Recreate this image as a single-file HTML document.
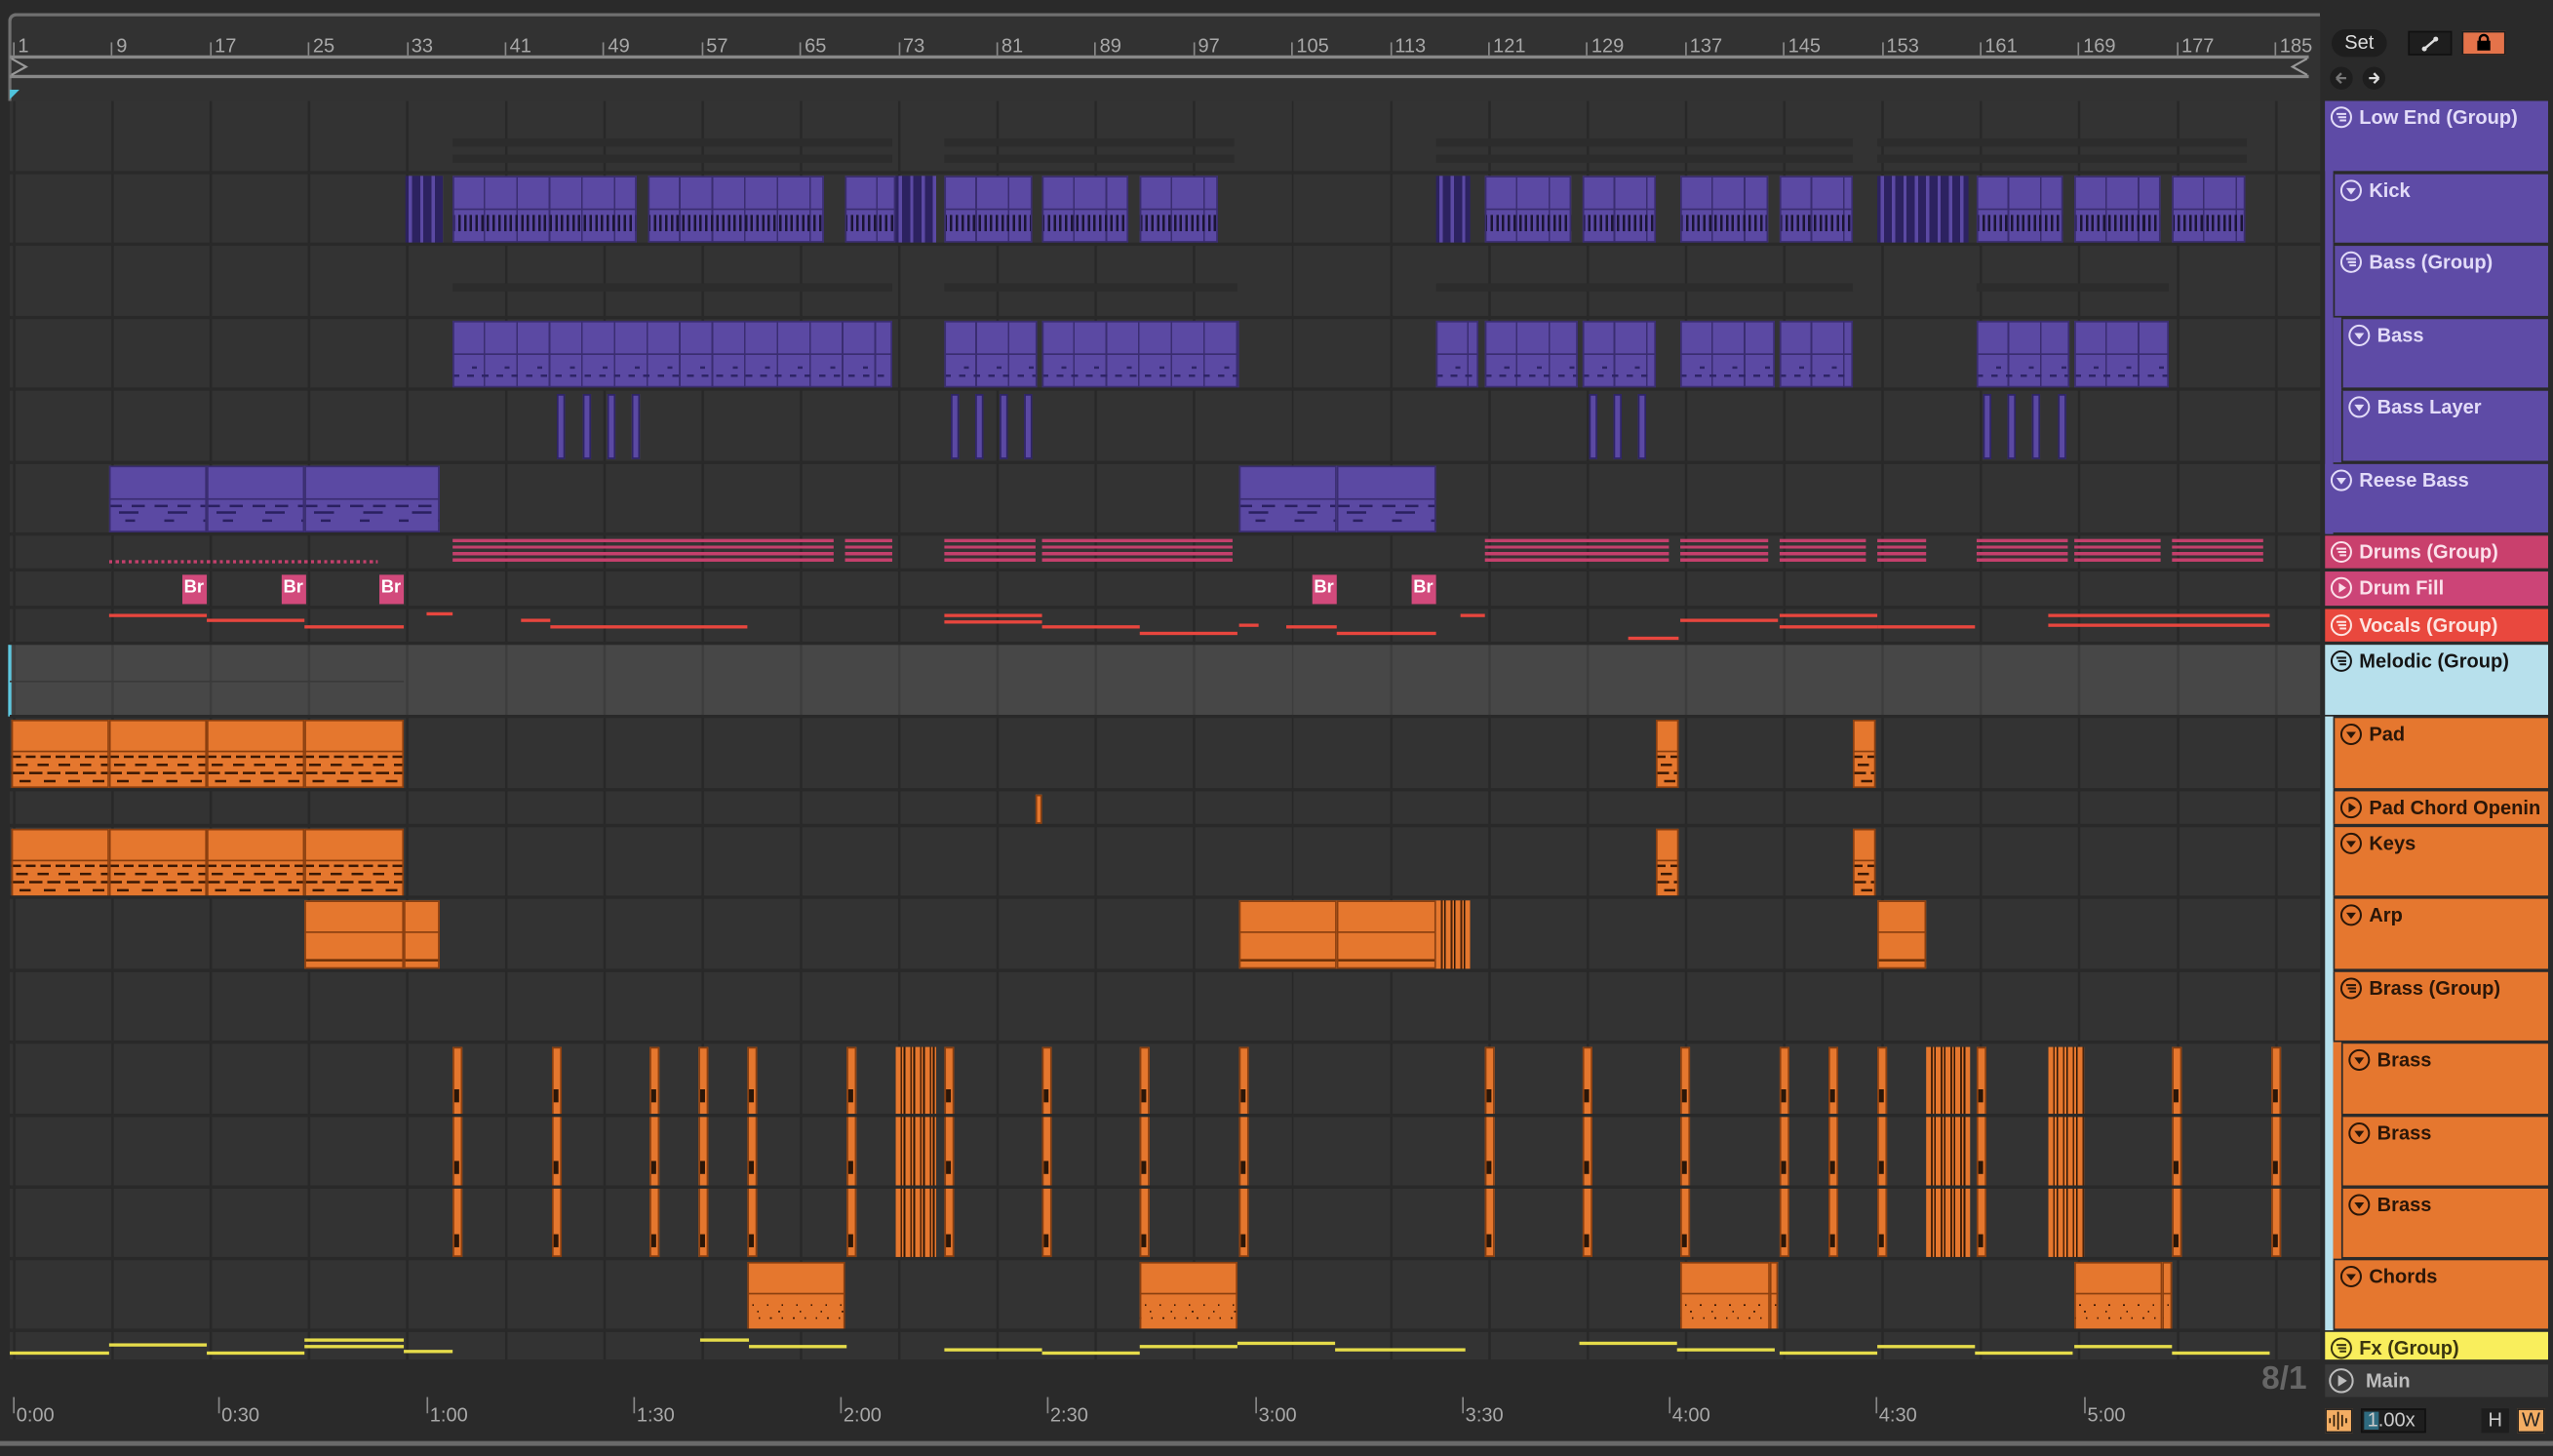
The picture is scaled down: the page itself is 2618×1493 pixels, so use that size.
<!DOCTYPE html>
<html><head><meta charset="utf-8"><style>
html,body{margin:0;padding:0;background:#2a2a2a;overflow:hidden;width:2618px;height:1492px}
#s{position:absolute;left:0;top:0;width:1568px;height:894px;transform:scale(1.66964);transform-origin:0 0;font-family:"Liberation Sans",sans-serif;background:#2a2a2a}
#s div,#s i,#s span{position:absolute;box-sizing:border-box;display:block;font-style:normal}
.lane{left:6px;top:62px;width:1419px;height:773px;background-color:#333;background-image:repeating-linear-gradient(90deg,#282828 0 1.5px,transparent 1.5px 60.4px);background-position:2px 0}
.h{left:6px;width:1419px;height:2px;background:#292929}
.rn{top:21px;font-size:12px;color:#a8a8a8}
.rt{top:26px;width:1px;height:8px;background:#888}
.p{background:#5b49a3;box-shadow:inset 0 0 0 1px #3a2d70}
.k{top:108px;height:41px;background:repeating-linear-gradient(90deg,#1b1535 0 1.5px,transparent 1.5px 3.5px) 0 24px/100% 10px no-repeat,linear-gradient(#3a2d70,#3a2d70) 0 20px/100% 1px no-repeat,repeating-linear-gradient(90deg,transparent 0 19px,#3a2d70 19px 20px),#5b49a3;box-shadow:inset 0 0 0 1px #3a2d70}
.ks{top:108px;height:41px;background:repeating-linear-gradient(90deg,#2c2260 0 2px,#5b49a3 2px 4px,#2c2260 4px 7px)}
.bs{top:197px;height:41px;background:repeating-linear-gradient(90deg,#2e2466 0 4px,transparent 4px 9px) 0 33px/100% 1.5px no-repeat,repeating-linear-gradient(90deg,transparent 0 12px,#2e2466 12px 15px,transparent 15px 20px) 0 28px/100% 1.5px no-repeat,linear-gradient(#3a2d70,#3a2d70) 0 20px/100% 1px no-repeat,repeating-linear-gradient(90deg,transparent 0 19px,#3a2d70 19px 20px),#5b49a3;box-shadow:inset 0 0 0 1px #3a2d70}
.bl{top:242px;height:40px;width:5px;background:#5b49a3;box-shadow:inset 0 0 0 1px #2e2466}
.re{top:286px;height:41px;background:repeating-linear-gradient(90deg,#2a2060 0 8px,transparent 8px 14px) 0 24px/100% 1.5px no-repeat,repeating-linear-gradient(90deg,transparent 0 6px,#2a2060 6px 18px,transparent 18px 30px) 0 28px/100% 1.5px no-repeat,repeating-linear-gradient(90deg,transparent 0 10px,#2a2060 10px 16px,transparent 16px 24px) 0 33px/100% 1.5px no-repeat,linear-gradient(#3a2d70,#3a2d70) 0 20px/100% 1px no-repeat,#5b49a3;box-shadow:inset 0 0 0 1px #3a2d70}
.gh{height:5px;background:#2c2c2c}
.dr{top:331px;height:15px;background:repeating-linear-gradient(180deg,#c4406c 0 2px,transparent 2px 4px)}
.df{top:353px;height:18px;width:15px;background:#d24a7c;color:#fff;font-size:11px;font-weight:bold;padding:2px 0 0 1px;overflow:hidden}
.v{height:2px;background:#e8463e}
.y{height:1.5px;background:#e6dc4a}
.o{background:#e5772e;box-shadow:inset 0 0 0 1px #8a3f10}
.pd{height:42px;background:repeating-linear-gradient(90deg,#3a1804 0 6px,transparent 6px 9px) 0 22px/100% 1.5px no-repeat,repeating-linear-gradient(90deg,transparent 0 3px,#3a1804 3px 10px,transparent 10px 13px) 0 27px/100% 1.5px no-repeat,repeating-linear-gradient(90deg,#3a1804 0 8px,transparent 8px 11px) 0 32px/100% 1.5px no-repeat,repeating-linear-gradient(90deg,transparent 0 5px,#3a1804 5px 12px,transparent 12px 15px) 0 37px/100% 1.5px no-repeat,linear-gradient(#8a3f10,#8a3f10) 0 19px/100% 1px no-repeat,#e5772e;box-shadow:inset 0 0 0 1px #8a3f10}
.ar{top:553px;height:42px;background:linear-gradient(#8a3f10,#8a3f10) 0 19px/100% 1px no-repeat,linear-gradient(#6b3008,#6b3008) 0 36px/100% 1.5px no-repeat,#e5772e;box-shadow:inset 0 0 0 1px #8a3f10}
.br{top:643px;height:129px;width:6px;background:linear-gradient(#2a1608,#2a1608) 1px 26px/3px 8px no-repeat,linear-gradient(#2a1608,#2a1608) 1px 70px/3px 8px no-repeat,linear-gradient(#2a1608,#2a1608) 1px 115px/3px 8px no-repeat,#e5772e;box-shadow:inset 0 0 0 1px #8a3f10}
.bw{top:643px;height:129px;background:repeating-linear-gradient(90deg,#e5772e 0 3px,#4a2208 3px 4px,#e5772e 4px 5px,#2a1608 5px 6px)}
.ch{top:775px;height:42px;background:repeating-linear-gradient(90deg,transparent 0 3px,#3a1804 3px 4px,transparent 4px 9px) 0 26px/100% 1px no-repeat,repeating-linear-gradient(90deg,transparent 0 6px,#3a1804 6px 7px,transparent 7px 13px) 0 30px/100% 1px no-repeat,repeating-linear-gradient(90deg,#3a1804 0 1px,transparent 1px 7px) 0 34px/100% 1px no-repeat,linear-gradient(#8a3f10,#8a3f10) 0 19px/100% 1px no-repeat,#e5772e;box-shadow:inset 0 0 0 1px #8a3f10}
.hd{font-size:12px;font-weight:bold;padding:3px 0 0 21px;white-space:nowrap;overflow:hidden}
.hd svg{position:absolute;left:3px;top:3px}
.pu{background:#5e4ba6;color:#e2dbf8}
.or{background:#e5772f;color:#2a1608}
.tl{top:862px;font-size:12px;color:#a8a8a8}
.tt{top:858px;width:1px;height:10px;background:#888}
</style></head><body><div id="s">

<div style="left:5px;top:8px;width:1420px;height:54px;border-top:2px solid #707070;border-left:2px solid #707070;border-top-left-radius:5px;background:#323232"></div>
<div style="left:6px;top:34px;width:1412px;height:1.5px;background:#888"></div>
<div style="left:6px;top:46px;width:1412px;height:1.5px;background:#888"></div>
<svg style="position:absolute;left:6px;top:35px" width="12" height="12"><path d="M1 1 L10 6 L1 11" fill="none" stroke="#999" stroke-width="1.3"/></svg>
<svg style="position:absolute;left:1406px;top:35px" width="12" height="12"><path d="M11 1 L2 6 L11 11" fill="none" stroke="#999" stroke-width="1.3"/></svg>
<i class="rt" style="left:8px"></i><span class="rn" style="left:11px">1</span>
<i class="rt" style="left:68.4px"></i><span class="rn" style="left:71.4px">9</span>
<i class="rt" style="left:128.8px"></i><span class="rn" style="left:131.8px">17</span>
<i class="rt" style="left:189.2px"></i><span class="rn" style="left:192.2px">25</span>
<i class="rt" style="left:249.6px"></i><span class="rn" style="left:252.6px">33</span>
<i class="rt" style="left:310px"></i><span class="rn" style="left:313px">41</span>
<i class="rt" style="left:370.4px"></i><span class="rn" style="left:373.4px">49</span>
<i class="rt" style="left:430.8px"></i><span class="rn" style="left:433.8px">57</span>
<i class="rt" style="left:491.2px"></i><span class="rn" style="left:494.2px">65</span>
<i class="rt" style="left:551.6px"></i><span class="rn" style="left:554.6px">73</span>
<i class="rt" style="left:612px"></i><span class="rn" style="left:615px">81</span>
<i class="rt" style="left:672.4px"></i><span class="rn" style="left:675.4px">89</span>
<i class="rt" style="left:732.8px"></i><span class="rn" style="left:735.8px">97</span>
<i class="rt" style="left:793.2px"></i><span class="rn" style="left:796.2px">105</span>
<i class="rt" style="left:853.6px"></i><span class="rn" style="left:856.6px">113</span>
<i class="rt" style="left:914px"></i><span class="rn" style="left:917px">121</span>
<i class="rt" style="left:974.4px"></i><span class="rn" style="left:977.4px">129</span>
<i class="rt" style="left:1034.8px"></i><span class="rn" style="left:1037.8px">137</span>
<i class="rt" style="left:1095.2px"></i><span class="rn" style="left:1098.2px">145</span>
<i class="rt" style="left:1155.6px"></i><span class="rn" style="left:1158.6px">153</span>
<i class="rt" style="left:1216px"></i><span class="rn" style="left:1219px">161</span>
<i class="rt" style="left:1276.4px"></i><span class="rn" style="left:1279.4px">169</span>
<i class="rt" style="left:1336.8px"></i><span class="rn" style="left:1339.8px">177</span>
<i class="rt" style="left:1397.2px"></i><span class="rn" style="left:1400.2px">185</span>

<div class="lane"></div>
<div style="left:6px;top:396px;width:1419px;height:44px;background:rgba(255,255,255,0.1)"></div>
<div style="left:5px;top:396px;width:2px;height:44px;background:#5ec8e0"></div>
<svg style="position:absolute;left:6px;top:55px" width="6" height="6"><path d="M0 0 L6 0 L0 6Z" fill="#4fc3dc"/></svg>

<i class="gh" style="top:85px;left:278px;width:270px"></i><i class="gh" style="top:95px;left:278px;width:270px"></i>
<i class="gh" style="top:85px;left:580px;width:178px"></i><i class="gh" style="top:95px;left:580px;width:178px"></i>
<i class="gh" style="top:85px;left:882px;width:256px"></i><i class="gh" style="top:95px;left:882px;width:256px"></i>
<i class="gh" style="top:85px;left:1153px;width:227px"></i><i class="gh" style="top:95px;left:1153px;width:227px"></i>
<i class="gh" style="top:174px;left:278px;width:270px"></i><i class="gh" style="top:174px;left:580px;width:180px"></i>
<i class="gh" style="top:174px;left:882px;width:256px"></i><i class="gh" style="top:174px;left:1214px;width:118px"></i>

<i class="ks" style="left:249px;width:23px"></i>
<i class="k" style="left:278px;width:113px"></i><i class="k" style="left:398px;width:108px"></i>
<i class="k" style="left:519px;width:31px"></i><i class="ks" style="left:550px;width:25px"></i>
<i class="k" style="left:580px;width:54px"></i><i class="k" style="left:640px;width:53px"></i>
<i class="k" style="left:700px;width:48px"></i><i class="ks" style="left:882px;width:21px"></i>
<i class="k" style="left:912px;width:53px"></i><i class="k" style="left:972px;width:45px"></i>
<i class="k" style="left:1032px;width:54px"></i><i class="k" style="left:1093px;width:45px"></i>
<i class="ks" style="left:1153px;width:56px"></i><i class="k" style="left:1214px;width:53px"></i>
<i class="k" style="left:1274px;width:53px"></i><i class="k" style="left:1334px;width:45px"></i>

<i class="bs" style="left:278px;width:270px"></i><i class="bs" style="left:580px;width:57px"></i>
<i class="bs" style="left:640px;width:121px"></i><i class="bs" style="left:882px;width:26px"></i>
<i class="bs" style="left:912px;width:57px"></i><i class="bs" style="left:972px;width:45px"></i>
<i class="bs" style="left:1032px;width:58px"></i><i class="bs" style="left:1093px;width:45px"></i>
<i class="bs" style="left:1214px;width:57px"></i><i class="bs" style="left:1274px;width:58px"></i>

<i class="bl" style="left:342px"></i><i class="bl" style="left:358px"></i><i class="bl" style="left:373px"></i><i class="bl" style="left:388px"></i>
<i class="bl" style="left:584px"></i><i class="bl" style="left:599px"></i><i class="bl" style="left:614px"></i><i class="bl" style="left:629px"></i>
<i class="bl" style="left:976px"></i><i class="bl" style="left:991px"></i><i class="bl" style="left:1006px"></i>
<i class="bl" style="left:1218px"></i><i class="bl" style="left:1233px"></i><i class="bl" style="left:1248px"></i><i class="bl" style="left:1264px"></i>

<i class="re" style="left:67px;width:60px"></i><i class="re" style="left:127px;width:60px"></i><i class="re" style="left:187px;width:83px"></i>
<i class="re" style="left:761px;width:60px"></i><i class="re" style="left:821px;width:61px"></i>

<i class="dr" style="left:278px;width:234px"></i><i class="dr" style="left:519px;width:29px"></i>
<i class="dr" style="left:580px;width:56px"></i><i class="dr" style="left:640px;width:117px"></i>
<i class="dr" style="left:912px;width:113px"></i><i class="dr" style="left:1032px;width:54px"></i>
<i class="dr" style="left:1093px;width:53px"></i><i class="dr" style="left:1153px;width:30px"></i>
<i class="dr" style="left:1214px;width:56px"></i><i class="dr" style="left:1274px;width:53px"></i>
<i class="dr" style="left:1334px;width:56px"></i>
<i style="left:67px;top:344px;width:165px;height:2px;background:repeating-linear-gradient(90deg,#c4406c 0 2px,transparent 2px 4px)"></i>

<span class="df" style="left:112px">Br</span><span class="df" style="left:173px">Br</span><span class="df" style="left:233px">Br</span>
<span class="df" style="left:806px">Br</span><span class="df" style="left:867px">Br</span>

<i class="v" style="left:67px;width:60px;top:377px"></i><i class="v" style="left:127px;width:60px;top:380px"></i>
<i class="v" style="left:187px;width:61px;top:384px"></i><i class="v" style="left:262px;width:16px;top:376px"></i>
<i class="v" style="left:320px;width:18px;top:380px"></i><i class="v" style="left:338px;width:121px;top:384px"></i>
<i class="v" style="left:580px;width:60px;top:377px"></i><i class="v" style="left:580px;width:60px;top:381px"></i>
<i class="v" style="left:640px;width:60px;top:384px"></i><i class="v" style="left:700px;width:60px;top:388px"></i>
<i class="v" style="left:761px;width:12px;top:383px"></i><i class="v" style="left:790px;width:31px;top:384px"></i>
<i class="v" style="left:821px;width:61px;top:388px"></i><i class="v" style="left:897px;width:15px;top:377px"></i>
<i class="v" style="left:1000px;width:31px;top:391px"></i><i class="v" style="left:1032px;width:60px;top:380px"></i>
<i class="v" style="left:1093px;width:60px;top:377px"></i><i class="v" style="left:1093px;width:60px;top:384px"></i>
<i class="v" style="left:1153px;width:60px;top:384px"></i><i class="v" style="left:1258px;width:136px;top:377px"></i>
<i class="v" style="left:1258px;width:136px;top:383px"></i>

<i style="left:6px;top:418px;width:242px;height:1px;background:#3a3a3a"></i>

<i class="o pd" style="top:442px;left:7px;width:60px"></i><i class="o pd" style="top:442px;left:67px;width:60px"></i>
<i class="o pd" style="top:442px;left:127px;width:60px"></i><i class="o pd" style="top:442px;left:187px;width:61px"></i>
<i class="o pd" style="top:442px;left:1017px;width:14px"></i><i class="o pd" style="top:442px;left:1138px;width:14px"></i>
<i class="o" style="top:488px;left:636px;width:4px;height:18px"></i>
<i class="o pd" style="top:509px;left:7px;width:60px"></i><i class="o pd" style="top:509px;left:67px;width:60px"></i>
<i class="o pd" style="top:509px;left:127px;width:60px"></i><i class="o pd" style="top:509px;left:187px;width:61px"></i>
<i class="o pd" style="top:509px;left:1017px;width:14px"></i><i class="o pd" style="top:509px;left:1138px;width:14px"></i>

<i class="ar" style="left:187px;width:61px"></i><i class="ar" style="left:248px;width:22px"></i>
<i class="ar" style="left:761px;width:60px"></i><i class="ar" style="left:821px;width:61px"></i>
<i class="bw" style="top:553px;height:42px;left:882px;width:21px"></i>
<i class="ar" style="left:1153px;width:30px"></i>

<i class="br" style="left:278px"></i><i class="br" style="left:339px"></i><i class="br" style="left:399px"></i>
<i class="br" style="left:429px"></i><i class="br" style="left:459px"></i><i class="br" style="left:520px"></i>
<i class="bw" style="left:550px;width:25px"></i><i class="br" style="left:580px"></i>
<i class="br" style="left:640px"></i><i class="br" style="left:700px"></i><i class="br" style="left:761px"></i>
<i class="br" style="left:912px"></i><i class="br" style="left:972px"></i><i class="br" style="left:1032px"></i>
<i class="br" style="left:1093px"></i><i class="br" style="left:1123px"></i><i class="br" style="left:1153px"></i>
<i class="bw" style="left:1183px;width:27px"></i><i class="br" style="left:1214px"></i>
<i class="bw" style="left:1258px;width:22px"></i><i class="br" style="left:1334px"></i><i class="br" style="left:1395px"></i>

<i class="o ch" style="left:459px;width:60px"></i><i class="o ch" style="left:700px;width:60px"></i>
<i class="o ch" style="left:1032px;width:55px"></i><i class="o ch" style="left:1087px;width:5px"></i>
<i class="o ch" style="left:1274px;width:54px"></i><i class="o ch" style="left:1328px;width:6px"></i>

<i class="y" style="left:6px;width:61px;top:830px"></i><i class="y" style="left:67px;width:60px;top:825px"></i>
<i class="y" style="left:127px;width:60px;top:830px"></i><i class="y" style="left:187px;width:61px;top:822px"></i>
<i class="y" style="left:187px;width:61px;top:826px"></i><i class="y" style="left:248px;width:30px;top:829px"></i>
<i class="y" style="left:430px;width:30px;top:822px"></i><i class="y" style="left:460px;width:60px;top:826px"></i>
<i class="y" style="left:580px;width:60px;top:828px"></i><i class="y" style="left:640px;width:60px;top:830px"></i>
<i class="y" style="left:700px;width:60px;top:826px"></i><i class="y" style="left:760px;width:60px;top:824px"></i>
<i class="y" style="left:820px;width:80px;top:828px"></i><i class="y" style="left:970px;width:60px;top:824px"></i>
<i class="y" style="left:1030px;width:60px;top:828px"></i><i class="y" style="left:1093px;width:60px;top:830px"></i>
<i class="y" style="left:1153px;width:60px;top:826px"></i><i class="y" style="left:1213px;width:60px;top:830px"></i>
<i class="y" style="left:1274px;width:60px;top:826px"></i><i class="y" style="left:1334px;width:60px;top:830px"></i>

<i class="h" style="top:105px"></i><i class="h" style="top:149px"></i><i class="h" style="top:194px"></i>
<i class="h" style="top:238px"></i><i class="h" style="top:283px"></i><i class="h" style="top:327px"></i>
<i class="h" style="top:349px"></i><i class="h" style="top:372px"></i><i class="h" style="top:394px"></i>
<i class="h" style="top:439px"></i><i class="h" style="top:484px"></i><i class="h" style="top:506px"></i>
<i class="h" style="top:550px"></i><i class="h" style="top:595px"></i><i class="h" style="top:639px"></i>
<i class="h" style="top:684px"></i><i class="h" style="top:728px"></i><i class="h" style="top:772px"></i>
<i class="h" style="top:816px"></i>
<div style="left:0;top:835px;width:1428px;height:23px;background:#2a2a2a"></div>
<span style="left:1389px;top:836px;font-size:20px;font-weight:bold;color:#666">8/1</span>

<div style="left:1428px;top:62px;width:5px;height:266px;background:#5e4ba6"></div>
<div style="left:1433px;top:195px;width:5px;height:89px;background:#5e4ba6"></div>
<div style="left:1428px;top:440px;width:5px;height:377px;background:#b7e0ec"></div>
<div style="left:1438px;top:640px;width:1px;height:133px;background:#2a2a2a"></div>
<div style="left:1433px;top:640px;width:5px;height:133px;background:#e5772f"></div>

<div class="hd pu" style="left:1428px;top:62px;width:137px;height:43px"><svg width="14" height="14"><circle cx="7" cy="7" r="6" fill="none" stroke="#e2dbf8" stroke-width="1.2"/><path d="M4 5h6M5 7h5M6 9h4" stroke="#e2dbf8" stroke-width="1.2"/></svg>Low End (Group)</div>
<div class="hd pu" style="left:1433px;top:107px;width:132px;height:42px;border-left:1px solid #2a2a2a"><svg width="14" height="14"><circle cx="7" cy="7" r="6" fill="none" stroke="#e2dbf8" stroke-width="1.2"/><path d="M4 5.5h6l-3 4z" fill="#e2dbf8"/></svg>Kick</div>
<div class="hd pu" style="left:1433px;top:151px;width:132px;height:43px;border-left:1px solid #2a2a2a"><svg width="14" height="14"><circle cx="7" cy="7" r="6" fill="none" stroke="#e2dbf8" stroke-width="1.2"/><path d="M4 5h6M5 7h5M6 9h4" stroke="#e2dbf8" stroke-width="1.2"/></svg>Bass (Group)</div>
<div class="hd pu" style="left:1438px;top:196px;width:127px;height:42px;border-left:1px solid #2a2a2a"><svg width="14" height="14"><circle cx="7" cy="7" r="6" fill="none" stroke="#e2dbf8" stroke-width="1.2"/><path d="M4 5.5h6l-3 4z" fill="#e2dbf8"/></svg>Bass</div>
<div class="hd pu" style="left:1438px;top:240px;width:127px;height:43px;border-left:1px solid #2a2a2a"><svg width="14" height="14"><circle cx="7" cy="7" r="6" fill="none" stroke="#e2dbf8" stroke-width="1.2"/><path d="M4 5.5h6l-3 4z" fill="#e2dbf8"/></svg>Bass Layer</div>
<div class="hd pu" style="left:1428px;top:285px;width:137px;height:42px"><svg width="14" height="14"><circle cx="7" cy="7" r="6" fill="none" stroke="#e2dbf8" stroke-width="1.2"/><path d="M4 5.5h6l-3 4z" fill="#e2dbf8"/></svg>Reese Bass</div>
<div class="hd" style="left:1428px;top:329px;width:137px;height:20px;background:#c9406d;color:#fbe0ea"><svg width="14" height="14"><circle cx="7" cy="7" r="6" fill="none" stroke="#fbe0ea" stroke-width="1.2"/><path d="M4 5h6M5 7h5M6 9h4" stroke="#fbe0ea" stroke-width="1.2"/></svg>Drums (Group)</div>
<div class="hd" style="left:1428px;top:351px;width:137px;height:21px;background:#cc4477;color:#fbe0ea"><svg width="14" height="14"><circle cx="7" cy="7" r="6" fill="none" stroke="#fbe0ea" stroke-width="1.2"/><path d="M5.5 4v6l4.5-3z" fill="#fbe0ea"/></svg>Drum Fill</div>
<div class="hd" style="left:1428px;top:374px;width:137px;height:20px;background:#e9483e;color:#fde4e0"><svg width="14" height="14"><circle cx="7" cy="7" r="6" fill="none" stroke="#fde4e0" stroke-width="1.2"/><path d="M4 5h6M5 7h5M6 9h4" stroke="#fde4e0" stroke-width="1.2"/></svg>Vocals (Group)</div>
<div class="hd" style="left:1428px;top:396px;width:137px;height:43px;background:#b7e0ec;color:#151515"><svg width="14" height="14"><circle cx="7" cy="7" r="6" fill="none" stroke="#151515" stroke-width="1.2"/><path d="M4 5h6M5 7h5M6 9h4" stroke="#151515" stroke-width="1.2"/></svg>Melodic (Group)</div>
<div class="hd or" style="left:1433px;top:441px;width:132px;height:43px;border-left:1px solid #2a2a2a"><svg width="14" height="14"><circle cx="7" cy="7" r="6" fill="none" stroke="#2a1608" stroke-width="1.2"/><path d="M4 5.5h6l-3 4z" fill="#2a1608"/></svg>Pad</div>
<div class="hd or" style="left:1433px;top:486px;width:132px;height:20px;border-left:1px solid #2a2a2a"><svg width="14" height="14"><circle cx="7" cy="7" r="6" fill="none" stroke="#2a1608" stroke-width="1.2"/><path d="M5.5 4v6l4.5-3z" fill="#2a1608"/></svg>Pad Chord Openin</div>
<div class="hd or" style="left:1433px;top:508px;width:132px;height:42px;border-left:1px solid #2a2a2a"><svg width="14" height="14"><circle cx="7" cy="7" r="6" fill="none" stroke="#2a1608" stroke-width="1.2"/><path d="M4 5.5h6l-3 4z" fill="#2a1608"/></svg>Keys</div>
<div class="hd or" style="left:1433px;top:552px;width:132px;height:43px;border-left:1px solid #2a2a2a"><svg width="14" height="14"><circle cx="7" cy="7" r="6" fill="none" stroke="#2a1608" stroke-width="1.2"/><path d="M4 5.5h6l-3 4z" fill="#2a1608"/></svg>Arp</div>
<div class="hd or" style="left:1433px;top:597px;width:132px;height:42px;border-left:1px solid #2a2a2a"><svg width="14" height="14"><circle cx="7" cy="7" r="6" fill="none" stroke="#2a1608" stroke-width="1.2"/><path d="M4 5h6M5 7h5M6 9h4" stroke="#2a1608" stroke-width="1.2"/></svg>Brass (Group)</div>
<div class="hd or" style="left:1438px;top:641px;width:127px;height:43px;border-left:1px solid #2a2a2a"><svg width="14" height="14"><circle cx="7" cy="7" r="6" fill="none" stroke="#2a1608" stroke-width="1.2"/><path d="M4 5.5h6l-3 4z" fill="#2a1608"/></svg>Brass</div>
<div class="hd or" style="left:1438px;top:686px;width:127px;height:42px;border-left:1px solid #2a2a2a"><svg width="14" height="14"><circle cx="7" cy="7" r="6" fill="none" stroke="#2a1608" stroke-width="1.2"/><path d="M4 5.5h6l-3 4z" fill="#2a1608"/></svg>Brass</div>
<div class="hd or" style="left:1438px;top:730px;width:127px;height:42px;border-left:1px solid #2a2a2a"><svg width="14" height="14"><circle cx="7" cy="7" r="6" fill="none" stroke="#2a1608" stroke-width="1.2"/><path d="M4 5.5h6l-3 4z" fill="#2a1608"/></svg>Brass</div>
<div class="hd or" style="left:1433px;top:774px;width:132px;height:42px;border-left:1px solid #2a2a2a"><svg width="14" height="14"><circle cx="7" cy="7" r="6" fill="none" stroke="#2a1608" stroke-width="1.2"/><path d="M4 5.5h6l-3 4z" fill="#2a1608"/></svg>Chords</div>
<div class="hd" style="left:1428px;top:818px;width:137px;height:17px;background:#f9ee5c;color:#3a3510"><svg width="14" height="14"><circle cx="7" cy="7" r="6" fill="none" stroke="#3a3510" stroke-width="1.2"/><path d="M4 5h6M5 7h5M6 9h4" stroke="#3a3510" stroke-width="1.2"/></svg>Fx (Group)</div>
<div class="hd" style="left:1428px;top:838px;width:137px;height:20px;background:#3a3a3a;color:#bdbdbd;padding-left:25px;padding-top:3px"><svg width="16" height="16" style="left:2px;top:2px"><circle cx="8" cy="8" r="7" fill="none" stroke="#bdbdbd" stroke-width="1.2"/><path d="M6 4.5v7l5.5-3.5z" fill="#bdbdbd"/></svg>Main</div>

<div style="left:1432px;top:18px;width:34px;height:17px;border-radius:9px;background:#1e1e1e;color:#ddd;font-size:12px;text-align:center;line-height:17px">Set</div>
<div style="left:1479px;top:19px;width:27px;height:15px;background:#1e1e1e;border:1px solid #111"><svg width="25" height="13" style="position:absolute;left:0;top:0"><path d="M9 10 L16 4" stroke="#ddd" stroke-width="1.5"/><circle cx="9" cy="10" r="1.5" fill="#ddd"/><circle cx="16" cy="4" r="1.5" fill="#ddd"/></svg></div>
<div style="left:1512px;top:19px;width:27px;height:15px;background:#e4734a;border:1px solid #1e1e1e"><svg width="25" height="13" style="position:absolute;left:0;top:0"><rect x="8.5" y="5" width="8" height="6" fill="#000"/><path d="M10 5.5V4a2.5 2.5 0 0 1 5 0v1.5" fill="none" stroke="#000" stroke-width="1.4"/></svg></div>
<svg style="position:absolute;left:1430px;top:40px" width="40" height="16"><circle cx="8" cy="8" r="7" fill="#1e1e1e"/><path d="M5 8h6M5 8l3-3M5 8l3 3" stroke="#777" stroke-width="1.4" fill="none"/><circle cx="28" cy="8" r="7" fill="#1e1e1e"/><path d="M31 8h-6M31 8l-3-3M31 8l-3 3" stroke="#ddd" stroke-width="1.4" fill="none"/></svg>

<i class="tt" style="left:8px"></i><span class="tl" style="left:10px">0:00</span>
<i class="tt" style="left:134px"></i><span class="tl" style="left:136px">0:30</span>
<i class="tt" style="left:262px"></i><span class="tl" style="left:264px">1:00</span>
<i class="tt" style="left:389px"></i><span class="tl" style="left:391px">1:30</span>
<i class="tt" style="left:516px"></i><span class="tl" style="left:518px">2:00</span>
<i class="tt" style="left:643px"></i><span class="tl" style="left:645px">2:30</span>
<i class="tt" style="left:771px"></i><span class="tl" style="left:773px">3:00</span>
<i class="tt" style="left:898px"></i><span class="tl" style="left:900px">3:30</span>
<i class="tt" style="left:1025px"></i><span class="tl" style="left:1027px">4:00</span>
<i class="tt" style="left:1152px"></i><span class="tl" style="left:1154px">4:30</span>
<i class="tt" style="left:1280px"></i><span class="tl" style="left:1282px">5:00</span>
<div style="left:0;top:885px;width:1568px;height:3px;background:#6a6a6a"></div>

<div style="left:1428px;top:865px;width:17px;height:15px;background:#f3ad63;border:1px solid #1e1e1e"><svg width="15" height="13" style="position:absolute;left:0;top:0"><path d="M2 5v3M4.5 3v7M7 1v11M9.5 3v7M12 5v3" stroke="#2a1a08" stroke-width="1"/></svg></div>
<div style="left:1450px;top:865px;width:40px;height:15px;background:#1e1e1e;border:1px solid #111;color:#ccc;font-size:12px;line-height:13px;padding-left:3px"><i style="left:1px;top:1px;width:9px;height:11px;background:#2f6b80"></i><span style="position:relative;left:0;top:0">1.00x</span></div>
<div style="left:1524px;top:865px;width:17px;height:15px;background:#1e1e1e;color:#ccc;font-size:12px;text-align:center;line-height:15px">H</div>
<div style="left:1546px;top:865px;width:17px;height:15px;background:#f3ad63;border:1px solid #1e1e1e;color:#222;font-size:12px;text-align:center;line-height:13px">W</div>

</div></body></html>
